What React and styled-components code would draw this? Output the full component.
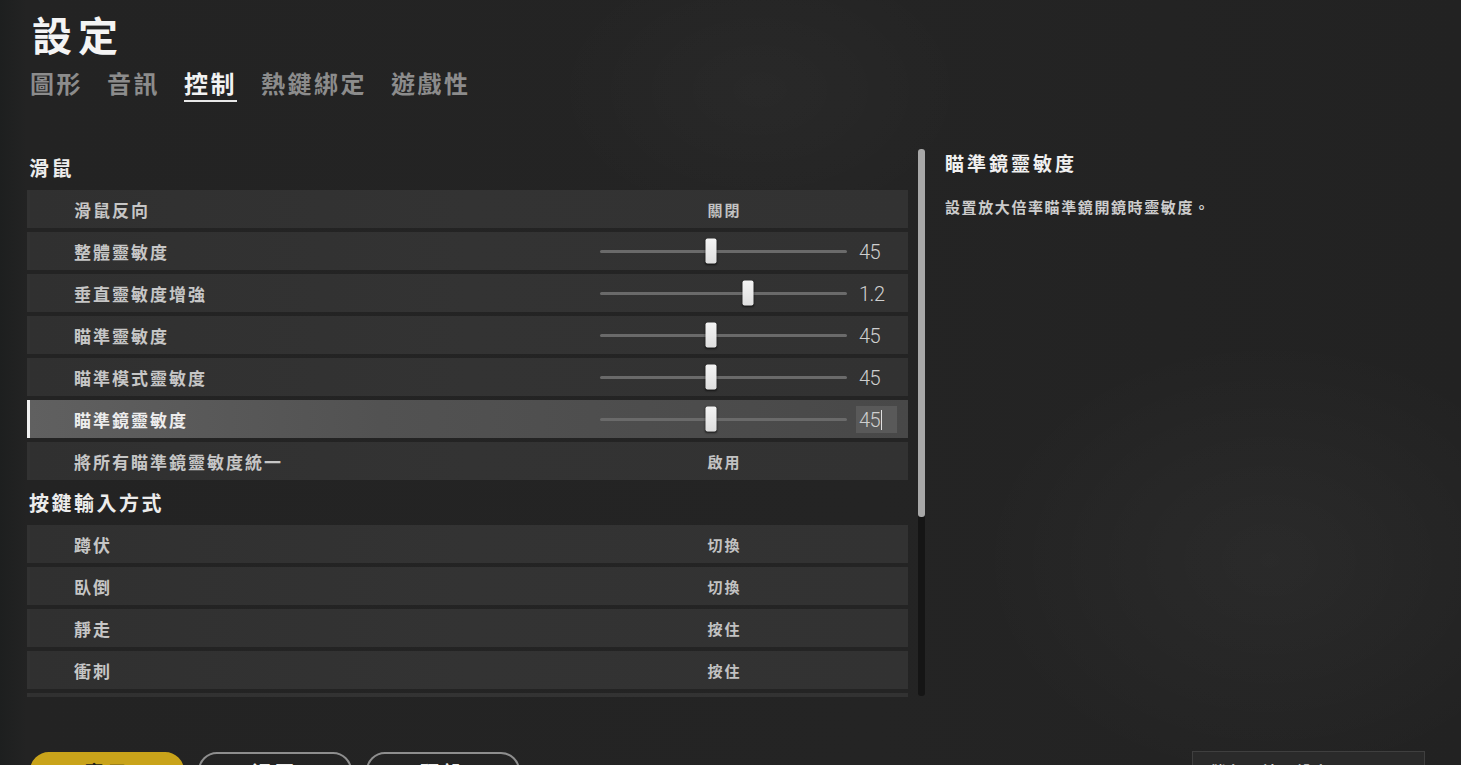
import styled, { createGlobalStyle } from "styled-components";

const GlobalStyle = createGlobalStyle`
  html, body {
    margin: 0;
    padding: 0;
    background: #232323;
  }
  * {
    box-sizing: border-box;
  }
`;

const CJK = `"Noto Sans CJK TC", "Noto Sans CJK SC", "Noto Sans", sans-serif`;

const Page = styled.div`
  width: 100%;
  height: 100vh;
  overflow: hidden;
  padding: 0 36px 0 27px;
  font-family: ${CJK};
  color: #e6e6e6;
  background:
    radial-gradient(ellipse 420px 320px at 1270px 560px, rgba(255, 255, 255, 0.035), transparent 70%),
    radial-gradient(ellipse 300px 200px at 760px 90px, rgba(255, 255, 255, 0.025), transparent 70%),
    linear-gradient(90deg, #1d1f1f 0px, #232323 26px, #242424 60%, #222 100%);
`;

const Header = styled.header`
  padding-top: 13px;
`;

const Title = styled.h1`
  margin: 0 0 0 5px;
  font-size: 40px;
  line-height: 42px;
  font-weight: 700;
  letter-spacing: 6px;
  color: #f4f4f4;
`;

const Tabs = styled.nav`
  display: flex;
  gap: 24px;
  margin: 13px 0 0 3px;
`;

const Tab = styled.span`
  font-size: 24px;
  line-height: 30px;
  font-weight: 700;
  letter-spacing: 2.5px;
  color: ${(p) => (p.active ? "#f2f2f2" : "#8c8c8c")};
  padding-bottom: 2px;
  border-bottom: 2px solid ${(p) => (p.active ? "#e8e8e8" : "transparent")};
`;

const Body = styled.main`
  display: flex;
  margin-top: 47px;
  height: 549px;
`;

const ListWrap = styled.div`
  display: flex;
  gap: 10px;
`;

const List = styled.div`
  width: 881px;
  height: 548px;
  overflow: hidden;
  display: flex;
  flex-direction: column;
  gap: 4px;
`;

const SectionHead = styled.div`
  flex: none;
  height: 37px;
  display: flex;
  align-items: center;
  padding-left: 2px;
  font-size: 20px;
  font-weight: 700;
  letter-spacing: 2.5px;
  color: #ececec;
`;

const Row = styled.div`
  flex: none;
  height: 38px;
  display: flex;
  align-items: center;
  padding: 0 11px 0 47px;
  border-left: 3px solid ${(p) => (p.selected ? "#f0f0f0" : "transparent")};
  background: ${(p) =>
    p.selected
      ? "linear-gradient(90deg, #606060 0%, #525252 40%, #484848 100%)"
      : "linear-gradient(90deg, #303030 0%, #333333 50%, #323232 100%)"};
`;

const Label = styled.span`
  flex: 1;
  margin-left: -3px;
  font-size: 17px;
  font-weight: 700;
  letter-spacing: 2px;
  color: ${(p) => (p.selected ? "#ededed" : "#c6c6c6")};
`;

const Control = styled.div`
  width: 247px;
  display: flex;
  justify-content: center;
  align-items: center;
`;

const ToggleText = styled.span`
  font-size: 15px;
  font-weight: 700;
  letter-spacing: 2px;
  color: #c2c2c2;
  padding-left: 2px;
`;

const Track = styled.div`
  position: relative;
  width: 100%;
  height: 3px;
  border-radius: 2px;
  background: #6a6a6a;
`;

const Thumb = styled.div`
  position: absolute;
  top: 50%;
  width: 11px;
  height: 25px;
  border-radius: 2px;
  transform: translate(-50%, -50%);
  background: linear-gradient(180deg, #f4f4f4 0%, #dedede 100%);
  box-shadow: 0 1px 2px rgba(0, 0, 0, 0.6);
`;

const NumBox = styled.div`
  width: 41px;
  height: 27px;
  margin-left: 9px;
  display: flex;
  align-items: center;
  padding: 1px 0 0 3px;
  font-family: Roboto, "Liberation Sans", sans-serif;
  font-size: 20px;
  font-weight: 300;
  letter-spacing: -0.5px;
  color: #cfcfcf;
  background: ${(p) => (p.editing ? "#595959" : "transparent")};
`;

const Caret = styled.span`
  display: inline-block;
  width: 1px;
  height: 20px;
  margin-left: 1px;
  background: #e0e0e0;
`;

const ScrollTrack = styled.div`
  width: 7px;
  height: 547px;
  border-radius: 3px;
  background: #151515;
  display: flex;
`;

const ScrollThumb = styled.div`
  width: 100%;
  height: 368px;
  border-radius: 3px;
  background: #a8a8a8;
`;

const Detail = styled.aside`
  margin-left: 20px;
`;

const DetailTitle = styled.h2`
  margin: 0;
  font-size: 19px;
  line-height: 28px;
  font-weight: 700;
  letter-spacing: 3px;
  color: #f0f0f0;
`;

const DetailText = styled.p`
  margin: 20px 0 0;
  font-size: 15px;
  line-height: 20px;
  font-weight: 700;
  letter-spacing: 1.6px;
  color: #cccccc;
`;

const Footer = styled.footer`
  display: flex;
  align-items: flex-start;
  margin-top: 53px;
  padding-left: 3px;
`;

const Buttons = styled.div`
  display: flex;
  gap: 14px;
  padding-top: 1px;
`;

const Button = styled.button`
  width: 154px;
  height: 38px;
  border-radius: 19px;
  font-family: ${CJK};
  font-size: 19px;
  font-weight: 700;
  letter-spacing: 4px;
  cursor: pointer;
  border: 2px solid ${(p) => (p.primary ? "#c9a31a" : "#8e8e8e")};
  background: ${(p) => (p.primary ? "#c9a31a" : "transparent")};
  color: ${(p) => (p.primary ? "#1d1d1d" : "#f0f0f0")};
`;

const Select = styled.div`
  margin-left: auto;
  width: 233px;
  height: 38px;
  display: flex;
  align-items: center;
  justify-content: space-between;
  padding: 0 16px 0 17px;
  background: #2a2a2a;
  border: 1px solid #3f3f3f;
  font-size: 15px;
  font-weight: 700;
  letter-spacing: 2px;
  color: #d0d0d0;
`;

const tabs = ["圖形", "音訊", "控制", "熱鍵綁定", "遊戲性"];

const mouseRows = [
  { label: "滑鼠反向", toggle: "關閉" },
  { label: "整體靈敏度", value: "45", pct: 45 },
  { label: "垂直靈敏度增強", value: "1.2", pct: 60 },
  { label: "瞄準靈敏度", value: "45", pct: 45 },
  { label: "瞄準模式靈敏度", value: "45", pct: 45 },
  { label: "瞄準鏡靈敏度", value: "45", pct: 45, selected: true },
  { label: "將所有瞄準鏡靈敏度統一", toggle: "啟用" },
];

const keyRows = [
  { label: "蹲伏", toggle: "切換" },
  { label: "臥倒", toggle: "切換" },
  { label: "靜走", toggle: "按住" },
  { label: "衝刺", toggle: "按住" },
  { label: "自動奔跑", toggle: "按住" },
];

function SettingRow({ row }) {
  return (
    <Row selected={row.selected}>
      <Label selected={row.selected}>{row.label}</Label>
      <Control>
        {row.toggle ? (
          <ToggleText>{row.toggle}</ToggleText>
        ) : (
          <Track>
            <Thumb style={{ left: `${row.pct}%` }} />
          </Track>
        )}
      </Control>
      <NumBox editing={row.selected}>
        {row.value}
        {row.selected && <Caret />}
      </NumBox>
    </Row>
  );
}

export default function App() {
  return (
    <>
      <GlobalStyle />
      <Page>
        <Header>
          <Title>設定</Title>
          <Tabs>
            {tabs.map((t) => (
              <Tab key={t} active={t === "控制"}>
                {t}
              </Tab>
            ))}
          </Tabs>
        </Header>
        <Body>
          <ListWrap>
            <List>
              <SectionHead>滑鼠</SectionHead>
              {mouseRows.map((r) => (
                <SettingRow key={r.label} row={r} />
              ))}
              <SectionHead>按鍵輸入方式</SectionHead>
              {keyRows.map((r) => (
                <SettingRow key={r.label} row={r} />
              ))}
            </List>
            <ScrollTrack>
              <ScrollThumb />
            </ScrollTrack>
          </ListWrap>
          <Detail>
            <DetailTitle>瞄準鏡靈敏度</DetailTitle>
            <DetailText>設置放大倍率瞄準鏡開鏡時靈敏度。</DetailText>
          </Detail>
        </Body>
        <Footer>
          <Buttons>
            <Button primary>應用</Button>
            <Button>返回</Button>
            <Button>預設</Button>
          </Buttons>
          <Select>
            <span>儲存 / 讀取設定</span>
            <svg width="12" height="8" viewBox="0 0 12 8">
              <path d="M1 1l5 5 5-5" fill="none" stroke="#cfcfcf" strokeWidth="1.8" />
            </svg>
          </Select>
        </Footer>
      </Page>
    </>
  );
}
